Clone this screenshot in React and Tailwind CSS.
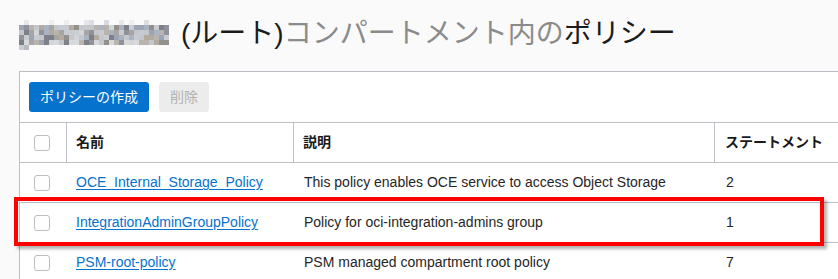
import React from "react";

function Mosaic() {
  const cols = 30;
  const rows = 6;
  const cells = [];
  let seed = 7;
  const rnd = () => {
    seed = (seed * 9301 + 49297) % 233280;
    return seed / 233280;
  };
  const palette = ["#8f9299", "#a7a5a3", "#b9b4ad", "#9da4b3", "#c4c7cc", "#7d8088", "#b4aba0", "#a9b3c2", "#d3d5d8", "#94908c"];
  for (let r = 0; r < rows; r++) {
    for (let c = 0; c < cols; c++) {
      const v = rnd();
      let fill = null;
      if (r === 0) {
        if (v > 0.55) fill = ["#e6e7ea", "#dcdee2", "#eceef0", "#d8dce2"][Math.floor(rnd() * 4)];
      } else if (r === 5) {
        if (c < 2) fill = c === 0 ? "#c9ccd0" : "#b8bcc2";
      } else if (r === 4) {
        fill = v > 0.2 ? palette[Math.floor(rnd() * palette.length)] : "#d7d9dc";
      } else {
        fill = v > 0.12 ? palette[Math.floor(rnd() * palette.length)] : "#c9cdd3";
      }
      if (fill) cells.push(<rect key={r + "-" + c} x={c * 5} y={r * 5} width="5" height="5" fill={fill} />);
    }
  }
  return (
    <svg width="150" height="30" viewBox="0 0 150 30" className="inline-block align-[-7px] mr-[12px]" shapeRendering="crispEdges">
      {cells}
    </svg>
  );
}

function Checkbox() {
  return <div className="w-[16px] h-[16px] rounded-[3px] border border-[#bdbdbd] bg-white" />;
}

const rows = [
  { name: "OCE_Internal_Storage_Policy", desc: "This policy enables OCE service to access Object Storage", n: "2" },
  { name: "IntegrationAdminGroupPolicy", desc: "Policy for oci-integration-admins group", n: "1" },
  { name: "PSM-root-policy", desc: "PSM managed compartment root policy", n: "7" },
];

export default function App() {
  const font = "font-['Liberation_Sans','Noto_Sans_CJK_JP',sans-serif]";
  return (
    <div className={`relative w-[838px] h-[279px] overflow-hidden bg-[#fafafa] ${font}`}>
      <div className="h-[71px] pl-[19px] pt-[20px] text-[28px] leading-[28px] whitespace-nowrap">
        <Mosaic />
        <span className="text-[#1b1b1b]">(ルート)</span>
        <span className="text-[#8b8b8b]">コンパートメント内の</span>
        <span className="text-[#1b1b1b]">ポリシー</span>
      </div>
      <div className="ml-[19px] border-l border-t border-[#bcc0c6] bg-white">
        <div className="h-[51px] border-b border-[#bcc0c6] pl-[9px] pt-[10px] flex gap-[10px]">
          <div className="h-[30px] w-[120px] rounded-[3px] bg-[#0572ce] text-white text-[14px] flex items-center justify-center">
            ポリシーの作成
          </div>
          <div className="h-[30px] w-[50px] rounded-[3px] bg-[#ececec] text-[#b3b3b3] text-[14px] flex items-center justify-center">
            削除
          </div>
        </div>
        <div className="flex h-[40px] border-b border-[#bcc0c6] text-[14px] font-bold text-[#1a1a1a]">
          <div className="w-[47px] border-r border-[#bcc0c6] flex items-center pl-[14px]">
            <Checkbox />
          </div>
          <div className="w-[227px] border-r border-[#bcc0c6] flex items-center pl-[9px]">名前</div>
          <div className="w-[421px] border-r border-[#bcc0c6] flex items-center pl-[9px]">説明</div>
          <div className="flex-1 flex items-center pl-[10px]">ステートメント</div>
        </div>
        {rows.map((r) => (
          <div key={r.name} className="flex h-[40px] border-b border-[#bcc0c6] text-[14px] text-[#262626]">
            <div className="w-[47px] flex items-center pl-[14px]">
              <Checkbox />
            </div>
            <div className="w-[227px] flex items-center pl-[9px]">
              <span className="text-[#0572ce] underline underline-offset-[2px]">{r.name}</span>
            </div>
            <div className="w-[421px] flex items-center pl-[10px]">{r.desc}</div>
            <div className="flex-1 flex items-center pl-[11px]">{r.n}</div>
          </div>
        ))}
      </div>
      <div className="absolute left-[14px] top-[197px] w-[810px] h-[49px] border-4 border-[#ff0000] shadow-[3px_3px_3px_rgba(0,0,0,0.3)]" />
    </div>
  );
}
